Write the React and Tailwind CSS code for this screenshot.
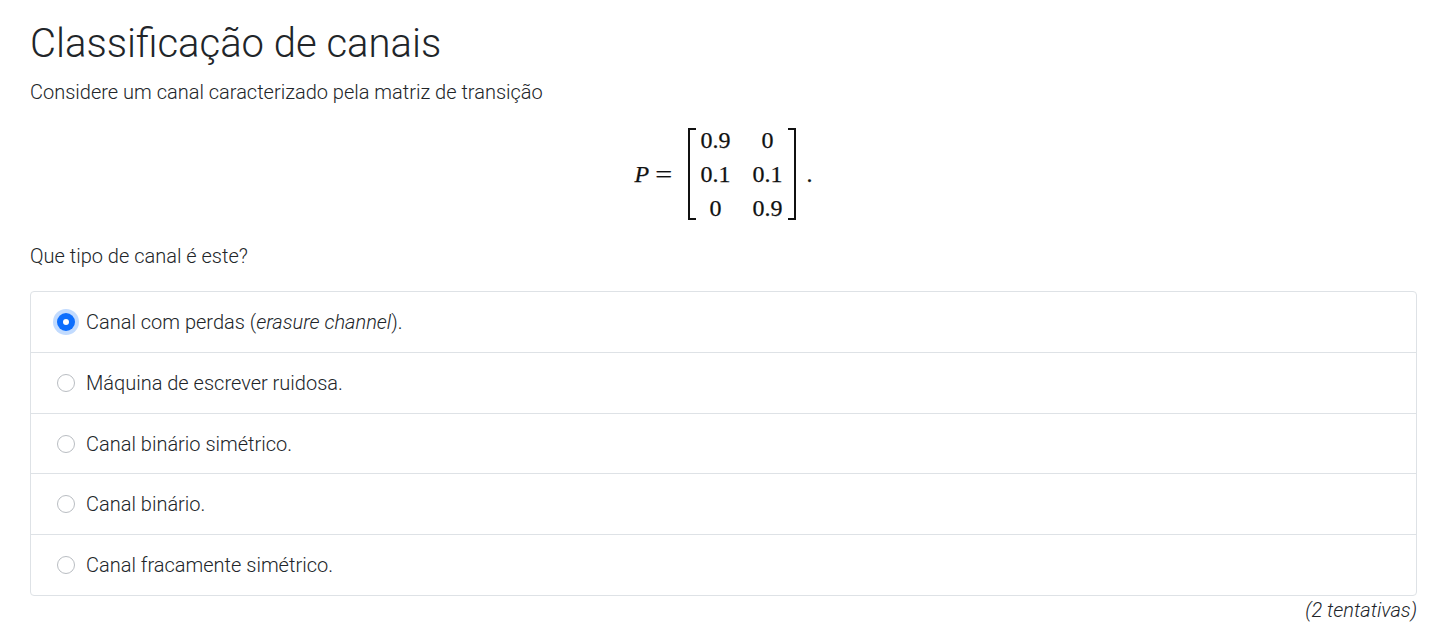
import React from "react";

const options = [
  { label: <>Canal com perdas (<em>erasure channel</em>).</>, checked: true },
  { label: <>Máquina de escrever ruidosa.</> },
  { label: <>Canal binário simétrico.</> },
  { label: <>Canal binário.</> },
  { label: <>Canal fracamente simétrico.</> },
];

function Bracket({ side }) {
  return (
    <div
      className={
        side === "left"
          ? "w-[8px] self-stretch border-l-2 border-t-2 border-b-2 border-[#111]"
          : "w-[8px] self-stretch border-r-2 border-t-2 border-b-2 border-[#111]"
      }
    />
  );
}

function Radio({ checked }) {
  if (checked) {
    return (
      <span className="flex h-[18px] w-[18px] shrink-0 items-center justify-center rounded-full bg-[#0d6efd] ring-4 ring-[#0d6efd]/25">
        <span className="h-[6px] w-[6px] rounded-full bg-white" />
      </span>
    );
  }
  return <span className="h-[18px] w-[18px] shrink-0 rounded-full border border-[#b9bdc2] bg-white" />;
}

export default function App() {
  return (
    <div className="min-h-[630px] bg-white pl-[30px] pr-[32px] pt-[20px] text-[#212529] [font-family:Roboto,'Noto_Sans',sans-serif]">
      <h1 className="text-[40px] font-light leading-[48px]">Classificação de canais</h1>
      <p className="mt-[9px] text-[20px] font-light leading-[30px]">
        Considere um canal caracterizado pela matriz de transição
      </p>

      <div className="mt-[21px] flex justify-center [font-family:'Liberation_Serif','DejaVu_Serif',serif] text-[24px] text-[#111] [-webkit-text-stroke:0.25px_#111]">
        <div className="flex h-[92px] items-center">
          <span className="italic mr-[5px]">P</span>
          <span className="inline-block scale-x-125 mx-[3px]">=</span>
          <div className="ml-[14px] flex h-[92px] items-stretch">
            <Bracket side="left" />
            <div className="grid grid-cols-[auto_auto] gap-x-[22px] px-[5px] content-center leading-[34px]">
              <span className="text-center">0.9</span>
              <span className="text-center">0</span>
              <span className="text-center">0.1</span>
              <span className="text-center">0.1</span>
              <span className="text-center">0</span>
              <span className="text-center">0.9</span>
            </div>
            <Bracket side="right" />
          </div>
          <span className="ml-[11px]">.</span>
        </div>
      </div>

      <p className="mt-[21px] text-[20px] font-light leading-[30px]">Que tipo de canal é este?</p>

      <div className="mt-[20px] rounded-[4px] border border-[#dee2e6]">
        {options.map((o, i) => (
          <div
            key={i}
            className={
              "flex items-center gap-[11px] px-[26px] text-[20px] font-light " +
              (i === 0 ? "h-[60px]" : i === 2 ? "h-[60px] border-t border-[#dee2e6]" : "h-[61px] border-t border-[#dee2e6]")
            }
          >
            <Radio checked={o.checked} />
            <span>{o.label}</span>
          </div>
        ))}
      </div>
      <div className="text-right text-[20px] font-light italic leading-[28px]">(2 tentativas)</div>
    </div>
  );
}
